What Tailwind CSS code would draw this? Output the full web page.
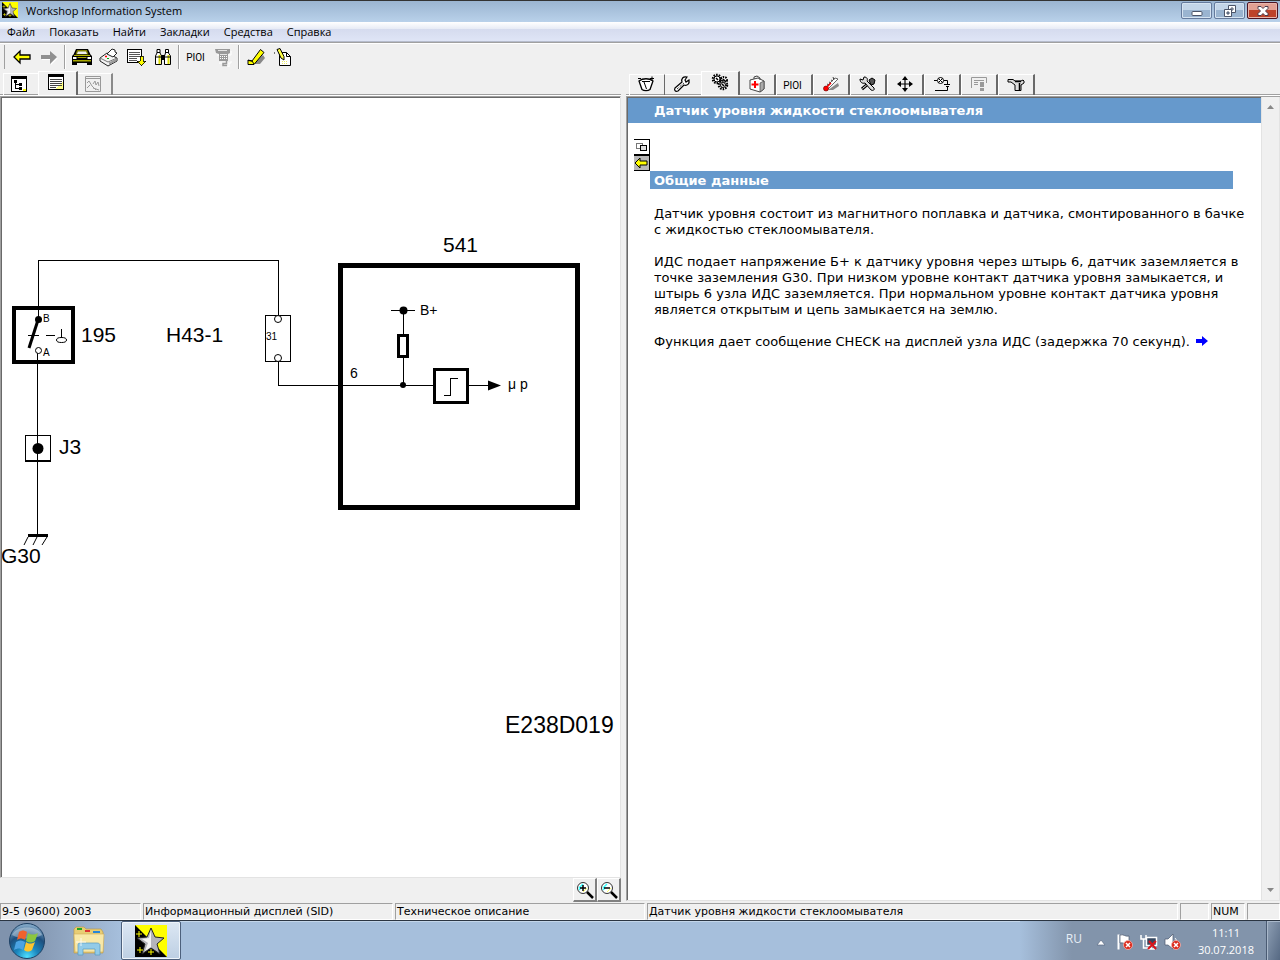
<!DOCTYPE html>
<html lang="ru">
  <head>
    <meta charset="UTF-8" />
    <meta name="viewport" content="width=device-width, initial-scale=1.0" />
    <title>Workshop Information System</title>
    <script src="https://cdn.jsdelivr.net/npm/@tailwindcss/browser@4"></script>
  </head>
  <body class="flex h-screen flex-col overflow-hidden bg-[#f0f0f0] font-['Open_Sans',sans-serif] text-[11px] text-black">
    <svg class="hidden">
      <symbol id="star-logo" viewBox="0 0 32 32">
        <path d="M0 0h32v32H0z" fill="#000" />
        <path d="M0 0h32v32z" fill="#ff0" />
        <path d="M16 3l4 9 9 1-7 6 3 10-9-6-9 6 3-10-8-6 10-1z" fill="#b4b4ba" stroke="#222" />
        <path d="M16 5v17l-6 4 3-8-6-4 7-1z" fill="#f4f4f4" />
        <path d="M4 6v6M1 9h6M5 22v6M2 25h6M16 24v6M13 27h6" stroke="#ff0" />
      </symbol>
      <symbol id="lens" viewBox="0 0 18 18">
        <circle cx="7" cy="7" r="5.5" fill="#fff" stroke="#333" />
        <path d="M3 7l4-4M3 9l2-2" stroke="#3ff" stroke-width="1.5" />
        <path d="M7 11l4-4" stroke="#ff6" />
        <path d="M11 11l6 6" stroke="#000" stroke-width="2.5" />
      </symbol>
      <symbol id="error-badge" viewBox="0 0 10 10">
        <circle cx="5" cy="5" r="4.5" fill="#dc2a1c" stroke="#f3b5ae" stroke-width=".8" />
        <path d="M3 3l4 4M7 3L3 7" stroke="#fff" stroke-width="1.5" />
      </symbol>
    </svg>

    <header class="flex h-[22px] shrink-0 items-start border-t border-[#333] bg-linear-to-b from-[#9bb5d1] to-[#b9d1ea]">
      <svg class="ml-0.5 mt-px size-4"><use href="#star-logo" /></svg>
      <h1 class="ml-2 flex-1 leading-5">Workshop Information System</h1>
      <div class="mr-0.5 mt-px flex gap-0.5">
        <button aria-label="Свернуть" class="flex h-[17px] w-[31px] items-center justify-center rounded-xs border border-[#657a9c] bg-linear-to-b from-[#c3d5e8] from-50% to-[#9ab4d0] to-50% shadow-[inset_0_0_0_1px_#d5e3f1]">
          <svg class="h-3 w-3" viewBox="0 0 12 12"><rect x="1" y="6.500" width="10" height="4" rx="1" fill="#fff" stroke="#4b5468" /></svg>
        </button>
        <button aria-label="Восстановить" class="flex h-[17px] w-[31px] items-center justify-center rounded-xs border border-[#657a9c] bg-linear-to-b from-[#c3d5e8] from-50% to-[#9ab4d0] to-50% shadow-[inset_0_0_0_1px_#d5e3f1]">
          <svg class="h-3 w-3" viewBox="0 0 12 12" fill="#fff" stroke="#4b5468"><path d="M4.500.5h7v7h-7z" /><path d="M7 3h2v2H7z" /><path d="M.5 4.500h7v7h-7z" /><path d="M3 7h2v2H3z" fill="#9ab4d0" /></svg>
        </button>
        <button aria-label="Закрыть" class="flex h-[17px] w-[31px] items-center justify-center rounded-xs border border-[#4d1422] bg-linear-to-b from-[#e2a093] from-50% to-[#bd4229] to-50% shadow-[inset_0_0_0_1px_#e8b5ab]">
          <svg class="h-3 w-3" viewBox="0 0 12 12"><path d="M1 1.500h3l2 2 2-2h3v2L8.500 6l2.500 2.500v2H8l-2-2-2 2H1v-2L3.500 6 1 3.500z" fill="#fff" stroke="#4b3a4a" /></svg>
        </button>
      </div>
    </header>

    <nav class="flex h-5 shrink-0 border-b border-[#b6bccc] bg-[linear-gradient(#fff,#e8ecf6_35%,#d5dbee_35%,#dfe5f6)] leading-5">
      <a href="#" class="px-[7px]">Файл</a>
      <a href="#" class="px-[7px]">Показать</a>
      <a href="#" class="px-[7px]">Найти</a>
      <a href="#" class="px-[7px]">Закладки</a>
      <a href="#" class="px-[7px]">Средства</a>
      <a href="#" class="px-[7px]">Справка</a>
    </nav>

    <div class="flex h-[29px] shrink-0 items-center border-t border-[#a0a0a0] shadow-[inset_0_1px_0_#fff]">
      <span class="ml-1 mr-[3px] h-6 w-px bg-[#a0a0a0]"></span>
      <button aria-label="Назад" class="flex w-[27px] justify-center">
        <svg class="size-5" viewBox="0 0 20 20"><path d="M2 10l6-6v4h10v4H8v4z" fill="#ff0" stroke="#000" stroke-width="1.300" /></svg>
      </button>
      <button aria-label="Вперёд" class="flex w-[27px] justify-center">
        <svg class="size-5" viewBox="0 0 20 20"><path d="M19 11l-7 7v-5H3v-1h9z" fill="#fff" /><path d="M18 10l-7-6v4H2v4h9v5z" fill="#909090" /></svg>
      </button>
      <span class="mx-0.5 h-6 w-0.5 border-l border-[#a0a0a0] bg-white"></span>
      <button aria-label="Автомобиль" class="flex w-[27px] justify-center">
        <svg class="h-5 w-[22px]" viewBox="0 0 22 20">
          <path d="M5 2h12l2.500 5.500L21 9v9h-5v-2H6v2H1V9l1.500-1.500z" fill="#000" />
          <path d="M6 3h10l1.500 4.500h-13z" fill="#808000" /><path d="M7 4.500h8l1 2.500H6z" fill="#f0f0f0" />
          <path d="M3 8h16v1H3z" fill="#b5b500" /><path d="M2 10h3.500v2H2zM16.500 10H20v2h-3.500z" fill="#fff" />
          <path d="M6.500 10h9v1h-9zM2 13h18v1.500H2z" fill="#a8a800" />
        </svg>
      </button>
      <button aria-label="Печать" class="flex w-[27px] justify-center">
        <svg class="size-5" viewBox="0 0 20 20" stroke="#222">
          <path d="M1 11l7-5 10 5v3l-9 5-8-5z" fill="#f4f4f4" /><path d="M1 11l8 4 9-4" fill="none" stroke="#777" />
          <path d="M8 7l5-5 3 1v2l2 1-4 4z" fill="#fff" /><path d="M10 15.500l7.500-4v2.500l-7.500 4z" fill="#999" stroke="none" />
          <path d="M6 9.500h2" stroke="#f00" stroke-width="1.500" /><path d="M8 11.500h2" stroke="#0a0" />
        </svg>
      </button>
      <button aria-label="Список" class="flex w-[27px] justify-center">
        <svg class="size-5" viewBox="0 0 20 20" shape-rendering="crispEdges">
          <path d="M1.500 2.500h14v13h-14z" fill="#fff" stroke="#000" /><path d="M3 5.500h11M3 7.500h11M3 9.500h11M3 11.500h8M3 13.500h8" stroke="#555" />
          <path d="M14 9h3v5h3l-4.500 5L11 14h3z" fill="#ff0" stroke="#000" stroke-width=".8" />
        </svg>
      </button>
      <button aria-label="Поиск" class="flex w-[27px] justify-center">
        <svg class="size-5" viewBox="0 0 20 20" stroke="#000">
          <path d="M4 2.500h3V6l1.500 3v8.500h-6V9L4 6zM12.500 2.500h3V6L17.500 9v8.500h-6V9l1-3z" fill="#fff" />
          <path d="M6.500 8v9M15.500 8v9" stroke="#dd0" stroke-width="2" /><path d="M4 5.500h3M12.500 5.500h3M2.500 10h6M11.500 10h6M8.500 8.500h3v4h-3z" />
        </svg>
      </button>
      <span class="mx-0.5 h-6 w-0.5 border-l border-[#a0a0a0] bg-white"></span>
      <button class="w-[27px] text-center font-['Liberation_Sans_Narrow','Roboto',sans-serif] text-[10px]">PIOI</button>
      <button aria-label="Телефон" class="flex w-[27px] justify-center">
        <svg class="size-5" viewBox="0 0 20 20">
          <path d="M4 8h14V4M6 16h12v-2M10 20h6v-4" fill="none" stroke="#fff" />
          <path d="M2 2h15v4l-2 1v7H6V7L3 6z" fill="#999" /><path d="M5 3.500h9M7 7.500h7" stroke="#e4e4e4" />
          <path d="M7 9.500h7M7 11.500h7" stroke="#fff" stroke-dasharray="1 1" />
          <path d="M13.500 14v2.500H10v2h4" fill="none" stroke="#999" stroke-width="1.500" />
        </svg>
      </button>
      <span class="mx-0.5 h-6 w-0.5 border-l border-[#a0a0a0] bg-white"></span>
      <button aria-label="Маркер" class="flex w-[27px] justify-center">
        <svg class="size-5" viewBox="0 0 20 20"><path d="M8 17l3-4 6-5 2 3-5 6z" fill="#888" /><path d="M2 13l4 1L14.500 2.500l3.500 3L8 17.500H2z" fill="#ff0" stroke="#000" /><path d="M2 13.500l4 .5 2 3" fill="none" stroke="#000" /></svg>
      </button>
      <button aria-label="Заметка" class="flex w-[27px] justify-center">
        <svg class="size-5" viewBox="0 0 20 20"><path d="M6.500 5.500h7l4 4v9h-11z" fill="#fff" stroke="#000" /><path d="M13.500 5.500v4h4" fill="none" stroke="#000" /><path d="M9 14.500h6M9 16.500h6" stroke="#ee6" stroke-dasharray="1 1" /><path d="M4 2.500l3-1 4 8v3.500l-3-2z" fill="#ff4" stroke="#000" /><path d="M1 6h1" stroke="#000" /></svg>
      </button>
    </div>

    <main class="grid min-h-0 flex-1 grid-cols-[626fr_654fr]">
      <section class="flex min-h-0 min-w-0 flex-col pr-[5px]">
        <div role="tablist" class="flex h-[25px] shrink-0 items-end border-b border-white pl-[3px] shadow-[inset_0_-1px_0_#a0a0a0]">
          <button role="tab" aria-label="Дерево" class="flex h-[22px] w-[35px] items-center justify-center border-l border-t border-white bg-[#f0f0f0] pb-0.5 pr-1 shadow-[inset_0_-1px_0_#a0a0a0]">
            <svg class="size-4" viewBox="0 0 16 16" shape-rendering="crispEdges"><path d="M.5.500h15v15H.5z" fill="#fff" stroke="#000" /><path d="M0 0h16v3H0z" /><path d="M3 4h3v3H3zM8 7h3v3H8zM8 11h3v3H8z" /><path d="M4.500 6v7M4 8.500h4M4 12.500h4" stroke="#000" /><path d="M12 13h3v2h-3z" fill="#ff0" /></svg>
          </button>
          <button role="tab" aria-selected="true" aria-label="Текст" class="flex h-6 w-10 items-start justify-center border-l border-r-2 border-t border-l-white border-r-[#696969] border-t-white bg-[#f0f0f0] pr-[3px] pt-0.5">
            <svg class="size-4" viewBox="0 0 16 16" shape-rendering="crispEdges"><path d="M.5.500h15v15H.5z" fill="#fff" stroke="#000" /><path d="M0 0h16v3H0z" /><path d="M7 15l8-8v8z" fill="#ff8" /><path d="M2 5.500h12M2 7.500h12M2 9.500h12M2 11.500h12M2 13.500h6" stroke="#444" /></svg>
          </button>
          <button role="tab" aria-label="График" class="flex h-[22px] w-[35px] items-center justify-center border-r-2 border-t border-r-[#8a8a8a] border-t-white bg-[#f0f0f0] pb-0.5 pr-[3px] shadow-[inset_0_-1px_0_#a0a0a0]">
            <svg class="size-4" viewBox="0 0 16 16" fill="none" stroke="#999"><path d="M.5.500h15v15H.5zM0 2.500h16" /><path d="M2 7l2-2 3 5 4 4M2 12l3-3M8 8l2-3 1 4 2-3 1 4M8 12l6 2" /></svg>
          </button>
        </div>

        <div class="min-h-0 flex-1 border border-b-[#e3e3e3] border-l-[#a0a0a0] border-r-[#e3e3e3] border-t-[#a0a0a0] bg-white">
          <div class="h-full overflow-hidden border-l border-t border-[#696969]">
            <!-- wiring diagram -->
            <svg width="618" height="779" viewBox="2 98 618 779" class="font-['Liberation_Sans',sans-serif] text-[21px]" fill="none" stroke="#000">
              <g shape-rendering="crispEdges">
                <path d="M38.500 318v-57.500h240V317M278.500 361v24.500H434M37.500 353v182" />
                <path d="M12 306h63v58H12zM16 310v50h55v-50z" fill="#000" fill-rule="evenodd" stroke="none" />
                <path d="M28 335.500h11M46 335.500h9M61.500 329v9" />
                <path d="M265.500 315.500h25v46h-25z" />
                <path d="M25.500 435.500h25v25h-25zM25 461.500h26" />
                <path d="M28 535.500h20" stroke-width="3" />
                <path d="M340.500 265.500h237v242h-237z" stroke-width="5" />
                <path d="M391 310.500h24M403.500 310v75" />
                <path d="M398.500 335.500h9v21h-9z" fill="#fff" stroke-width="3" />
                <path d="M434.500 369.500h33v33h-33z" stroke-width="3" />
                <path d="M444 395.500h6.500v-17h7M469 385.500h20" />
              </g>
              <path d="M38 320l-9 28" stroke-width="3" />
              <path d="M28 537l-4 8M37 537l-4 8M47 537l-5 8" />
              <ellipse cx="61.500" cy="340" rx="5" ry="2.500" />
              <circle cx="38.500" cy="350.500" r="3" fill="#fff" />
              <circle cx="278" cy="319" r="3.500" fill="#fff" />
              <circle cx="278" cy="358" r="3.500" fill="#fff" />
              <g fill="#000" stroke="none">
                <circle cx="38.500" cy="319.500" r="3.500" />
                <circle cx="38" cy="448.500" r="5.500" />
                <circle cx="403.500" cy="310.500" r="4" />
                <circle cx="403" cy="385" r="3" />
                <path d="M488 380.500l13 5-13 5z" />
                <text x="81" y="342">195</text>
                <text x="166" y="342">H43-1</text>
                <text x="59" y="454">J3</text>
                <text x="1" y="563">G30</text>
                <text x="443" y="252">541</text>
                <text x="505" y="733" class="text-[23px]">E238D019</text>
                <text x="420" y="315" class="text-sm">B+</text>
                <text x="350" y="378" class="text-sm">6</text>
                <text x="508" y="389" class="text-sm">μ p</text>
                <text x="43" y="322" class="text-[10px]">B</text>
                <text x="43" y="356" class="text-[10px]">A</text>
                <text x="266" y="340" class="text-[10px]">31</text>
              </g>
            </svg>
          </div>
        </div>

        <div class="flex h-[25px] shrink-0 justify-end pb-px">
          <button aria-label="Увеличить" class="flex size-6 items-center justify-center border-b-2 border-l border-r-2 border-t border-b-[#808080] border-l-white border-r-[#808080] border-t-white">
            <svg class="size-[18px]" viewBox="0 0 18 18"><use href="#lens" /><path d="M4 7h6M7 4v6" stroke="#000" stroke-width="1.500" /></svg>
          </button>
          <button aria-label="Уменьшить" class="flex size-6 items-center justify-center border-b-2 border-l border-r-2 border-t border-b-[#808080] border-l-white border-r-[#808080] border-t-white">
            <svg class="size-[18px]" viewBox="0 0 18 18"><use href="#lens" /><path d="M4 7h6" stroke="#000" stroke-width="1.500" /></svg>
          </button>
        </div>
      </section>

      <section class="flex min-h-0 min-w-0 flex-col pb-0.5">
        <div role="tablist" class="flex h-[25px] shrink-0 items-end border-b border-white pl-[3px] shadow-[inset_0_-1px_0_#a0a0a0]">
          <button role="tab" aria-label="Показатели" class="flex h-[21px] w-9 items-center justify-center border-l border-r border-t border-l-white border-r-[#696969] border-t-white bg-[#f0f0f0] pb-0.5 pr-[3px] shadow-[inset_0_-1px_0_#a0a0a0]">
            <svg class="size-[18px]" viewBox="0 0 18 18" fill="none" stroke="#000"><path d="M2 6c4-3 10-3 14 0l-3 8.500c-2 1.500-6 1.500-8 0z" fill="#fff" stroke-width="1.300" /><path d="M1 3.500h3M13 3.500h4M15 1.500v4M9.500 14L7 7M5 6.500l8 0" /></svg>
          </button>
          <button role="tab" aria-label="Ремонт" class="flex h-[21px] w-9 items-center justify-center border-t border-white bg-[#f0f0f0] pb-0.5 pr-[3px] shadow-[inset_0_-1px_0_#a0a0a0]">
            <svg class="size-[18px]" viewBox="0 0 18 18"><path d="M2 13l7-6c-1-3 1-6 5-5l-2 3 1 2 3-2c1 4-2 6-5 5l-6 6c-3 1-4-1-3-3z" fill="#fff" stroke="#000" stroke-width="1.200" /><path d="M4 14l7-6" stroke="#000" stroke-dasharray="1 1" /></svg>
          </button>
          <button role="tab" aria-selected="true" aria-label="Описание" class="flex h-6 w-[39px] items-start justify-center border-l border-r-2 border-t border-l-white border-r-[#696969] border-t-white bg-[#f0f0f0] pr-px pt-px">
            <svg class="size-[18px]" viewBox="0 0 18 18" fill="#fff" stroke="#000">
              <circle cx="6" cy="6" r="4" stroke-width="2.500" stroke-dasharray="1.500 1" /><circle cx="13" cy="7" r="3" stroke-width="2" stroke-dasharray="1.500 1" /><circle cx="12" cy="12" r="4" stroke-width="2.500" stroke-dasharray="1.500 1" />
              <circle cx="6" cy="6" r="3" /><circle cx="12" cy="12" r="2.500" /><path d="M5 5l2 2M11 11l2 2M12 6l2 2" stroke-width="1.500" />
            </svg>
          </button>
          <button role="tab" aria-label="Диагностика" class="flex h-[21px] w-9 items-center justify-center border-r-2 border-t border-r-[#696969] border-t-white bg-[#f0f0f0] pb-0.5 shadow-[inset_0_-1px_0_#a0a0a0]">
            <svg class="size-[18px]" viewBox="0 0 18 18" stroke="#444"><path d="M2 5l8-2 6 3v8l-4 3-10-3z" fill="#fff" /><path d="M12 8l4-2v8l-4 3z" fill="#aaa" stroke-width=".7" /><path d="M6 4V2l3-1 3 2v2" fill="none" /><path d="M7 6v7M3.500 9.500h7" stroke="#f00" stroke-width="2" /></svg>
          </button>
          <button role="tab" class="h-[21px] w-[37px] border-l border-r-2 border-t border-l-white border-r-[#696969] border-t-white bg-[#f0f0f0] pr-[3px] text-center font-['Liberation_Sans_Narrow','Roboto',sans-serif] text-[10px] shadow-[inset_0_-1px_0_#a0a0a0]">PIOI</button>
          <button role="tab" aria-label="Температура" class="flex h-[21px] w-[37px] items-center justify-center border-l border-r-2 border-t border-l-white border-r-[#696969] border-t-white bg-[#f0f0f0] pb-0.5 pr-px shadow-[inset_0_-1px_0_#a0a0a0]">
            <svg class="size-[18px]" viewBox="0 0 18 18"><path d="M6 15l10-7 1 3-6 4z" fill="#888" /><path d="M4 12L13 3l3 1-10 10z" fill="#fff" stroke="#444" stroke-width=".8" /><path d="M5 9l2 1M7 7l2 1M9 5l2 1M11 2l1 3" stroke="#444" /><circle cx="4" cy="13.500" r="2.500" fill="#f00" stroke="#500" stroke-width=".6" /><path d="M5 12l4-4" stroke="#f00" stroke-width="1.500" /></svg>
          </button>
          <button role="tab" aria-label="Инструменты" class="flex h-[21px] w-[37px] items-center justify-center border-l border-r-2 border-t border-l-white border-r-[#696969] border-t-white bg-[#f0f0f0] pb-0.5 pr-px shadow-[inset_0_-1px_0_#a0a0a0]">
            <svg class="size-[18px]" viewBox="0 0 18 18"><path d="M3 14l7-6" stroke="#000" stroke-width="3" /><path d="M3.500 13.500l6-5" stroke="#fff" /><path d="M1 4l3 1 1-3c3 0 4 2 3 4l7 7c1 2-1 3-3 2L6 8C3 9 1 7 1 4z" fill="#ddd" stroke="#000" /><path d="M10 5l3-2 3 2-1 4-3 1z" fill="#555" stroke="#000" /></svg>
          </button>
          <button role="tab" aria-label="Расположение" class="flex h-[21px] w-[37px] items-center justify-center border-l border-r-2 border-t border-l-white border-r-[#696969] border-t-white bg-[#f0f0f0] pb-0.5 pr-px shadow-[inset_0_-1px_0_#a0a0a0]">
            <svg class="size-4" viewBox="0 0 16 16"><path d="M8 2v12M2 8h12" stroke="#000" stroke-width="1.200" /><path d="M8 0l3 4H5zM8 16l3-4H5zM0 8l4-3v6zM16 8l-4-3v6z" /></svg>
          </button>
          <button role="tab" aria-label="Схема" class="flex h-[21px] w-[37px] items-center justify-center border-l border-r-2 border-t border-l-white border-r-[#696969] border-t-white bg-[#f0f0f0] pb-0.5 pr-px shadow-[inset_0_-1px_0_#a0a0a0]">
            <svg class="size-4" viewBox="0 0 16 16" fill="none" stroke="#000"><circle cx="6.500" cy="4.500" r="3" fill="#fff" /><path d="M0 4.500h3M10 4.500h3.500v4M4.500 2.500l4 4M8.500 2.500l-4 4M10 8.500h6M12 10.500h3M13.500 11v3.500H1" /></svg>
          </button>
          <button role="tab" aria-label="Сообщения" class="flex h-[21px] w-[37px] items-center justify-center border-l border-r-2 border-t border-l-white border-r-[#696969] border-t-white bg-[#f0f0f0] pb-0.5 pr-px shadow-[inset_0_-1px_0_#a0a0a0]">
            <svg class="size-4" viewBox="0 0 16 16" fill="none" stroke="#999"><path d="M.5 12V1.500h15V7M3 4.500h10M3 6.500h4M3 8.500h4" /><path d="M9 6h4v5H9zM9 12h4v3H9z" fill="#999" stroke="none" /></svg>
          </button>
          <button role="tab" aria-label="Обслуживание" class="flex h-[21px] w-[37px] items-center justify-center border-l border-r-2 border-t border-l-white border-r-[#696969] border-t-white bg-[#f0f0f0] pb-0.5 pr-px shadow-[inset_0_-1px_0_#a0a0a0]">
            <svg class="size-[18px]" viewBox="0 0 18 18"><path d="M1 4.500h5l2 1.500h6l2-1 1 1v2l-3 2v5.500H8V10L4 7H1z" fill="#ddd" stroke="#000" /><path d="M8 6.500h6M12.500 8v7" stroke="#000" stroke-width="1.500" /></svg>
          </button>
        </div>

        <div class="flex min-h-0 flex-1 border-b border-l border-t border-b-[#e3e3e3] border-l-[#a0a0a0] border-t-[#a0a0a0] bg-white">
          <article class="min-w-0 flex-1 overflow-hidden border-l border-t border-[#696969] pb-4 font-['DejaVu_Sans',sans-serif] text-[13px] leading-4">
            <h2 class="bg-[#6699cc] pb-1 pl-[26px] pt-[5px] font-bold text-white">Датчик уровня жидкости стеклоомывателя</h2>
            <div class="ml-1.5 mt-4 flex w-4 flex-col">
              <button aria-label="Копия окна" class="h-4 w-4 border-b border-r border-t border-black bg-white">
                <svg class="h-3.5 w-[15px]" viewBox="0 0 15 14" fill="none" shape-rendering="crispEdges"><path d="M2.500 3.500h6v5h-6z" stroke="#777" /><path d="M6.500 5.500h6v5h-6z" fill="#ddd" stroke="#000" /></svg>
              </button>
              <button aria-label="Назад" class="h-4 w-4 border-b border-r border-t border-black bg-[#b8b8b8]">
                <svg class="h-3.5 w-[15px]" viewBox="0 0 15 14"><path d="M1 7l5-5v3h7v4H6v3z" fill="#ff0" stroke="#000" /></svg>
              </button>
            </div>
            <h3 class="ml-[22px] mr-7 bg-[#6699cc] px-1 pt-0.5 font-bold text-white">Общие данные</h3>
            <div class="ml-[26px] mr-3 mt-[17px] space-y-4">
              <p>Датчик уровня состоит из магнитного поплавка и датчика, смонтированного в бачке с жидкостью стеклоомывателя.</p>
              <p>ИДС подает напряжение Б+ к датчику уровня через штырь 6, датчик заземляется в точке заземления G30. При низком уровне контакт датчика уровня замыкается, и штырь 6 узла ИДС заземляется. При нормальном уровне контакт датчика уровня является открытым и цепь замыкается на землю.</p>
              <p>
                Функция дает сообщение CHECK на дисплей узла ИДС (задержка 70 секунд).
                <a href="#" aria-label="Далее" class="inline-block pl-0.5"><svg class="h-2.5 w-3" viewBox="0 0 12 10"><path d="M0 3h6V0l6 5-6 5V7H0z" fill="#00f" /></svg></a>
              </p>
            </div>
          </article>
          <div class="flex w-[18px] shrink-0 flex-col justify-between border-l border-[#e3e3e3] bg-[#f0f0f0]">
            <button aria-label="Вверх" class="flex h-5 items-center justify-center"><svg class="h-1 w-[7px]" viewBox="0 0 7 4"><path d="M0 4l3.500-4L7 4z" fill="#888" /></svg></button>
            <button aria-label="Вниз" class="flex h-5 items-center justify-center"><svg class="h-1 w-[7px]" viewBox="0 0 7 4"><path d="M0 0l3.500 4L7 0z" fill="#888" /></svg></button>
          </div>
          <span class="w-px bg-[#e3e3e3]"></span>
        </div>
      </section>
    </main>

    <footer class="flex h-[17px] shrink-0 gap-0.5 font-['DejaVu_Sans',sans-serif] text-[11px] leading-4">
      <span class="w-[141px] border border-b-white border-l-[#a0a0a0] border-r-white border-t-[#a0a0a0] pl-px">9-5 (9600) 2003</span>
      <span class="w-[250px] border border-b-white border-l-[#a0a0a0] border-r-white border-t-[#a0a0a0] pl-px">Информационный дисплей (SID)</span>
      <span class="w-[250px] border border-b-white border-l-[#a0a0a0] border-r-white border-t-[#a0a0a0] pl-px">Техническое описание</span>
      <span class="flex-1 border border-b-white border-l-[#a0a0a0] border-r-white border-t-[#a0a0a0] pl-px">Датчик уровня жидкости стеклоомывателя</span>
      <span class="w-[29px] border border-b-white border-l-[#a0a0a0] border-r-white border-t-[#a0a0a0]"></span>
      <span class="w-[34px] border border-b-white border-l-[#a0a0a0] border-r-white border-t-[#a0a0a0] pl-px">NUM</span>
      <span class="w-[33px] border border-b-white border-l-[#a0a0a0] border-r-white border-t-[#a0a0a0]"></span>
    </footer>

    <div class="flex h-10 shrink-0 border-t border-[#2b3542] bg-[#a6bfdc] shadow-[inset_0_1px_0_#c3d6ea]">
      <div class="flex w-[121px] items-center bg-linear-to-r from-[#8093ad] from-20% to-[#a6bfdc]">
        <button aria-label="Пуск" class="ml-2">
          <svg class="size-[38px]" viewBox="0 0 38 38">
            <defs>
              <radialGradient id="orb" cx=".5" cy=".95" r=".9"><stop offset="0" stop-color="#4fe0ff" /><stop offset=".35" stop-color="#1b86bd" /><stop offset=".7" stop-color="#1d4f7e" /><stop offset="1" stop-color="#7fa5c5" /></radialGradient>
            </defs>
            <circle cx="19" cy="19" r="17.500" fill="url(#orb)" stroke="#1e4266" />
            <path d="M4 13C8 3 30 3 34 13c-7 4-22 5-30 0z" fill="#fff" opacity=".35" />
            <path d="M11 10c3-2 5-2 8 0l-2 8c-3-2-5-2-8 0z" fill="#f0622d" />
            <path d="M20 11c3 2 6 2 10 0l-3 8c-3 2-6 2-9 0z" fill="#8cc63f" />
            <path d="M8 20c3-2 6-2 9 0l-2 8c-3-2-5-2-9 0z" fill="#4ba3e3" />
            <path d="M18 20c3 2 5 2 9 0l-3 8c-3 2-5 2-8 0z" fill="#fdc52e" />
          </svg>
        </button>
        <button aria-label="Проводник" class="ml-[26px]">
          <svg class="h-[30px] w-[34px]" viewBox="0 0 34 30">
            <path d="M2 3l2-2h8l2 2h15l2 3v21H2z" fill="#e8cd74" stroke="#bb9540" stroke-width=".6" />
            <path d="M5 2h5v2H5z" fill="#23a523" /><path d="M13 4h5v2h-5z" fill="#d33" /><path d="M21 5h7v2h-7z" fill="#2987d8" />
            <path d="M2 8h30l-1 18H3z" fill="#f8e8a8" stroke="#d0ad58" stroke-width=".6" />
            <path d="M6 29V19c0-2 1-2 3-2h16c2 0 3 1 3 2v10h-5v-6H11v6z" fill="#92cbe8" stroke="#5798be" stroke-width=".7" />
            <path d="M4 16h10M9 12v8" stroke="#fff" opacity=".8" />
          </svg>
        </button>
      </div>
      <button aria-label="Workshop Information System" class="flex h-[39px] w-[60px] items-center justify-center rounded-xs border border-[#4c607c] bg-linear-to-b from-[#dce7f3] to-[#bdcfe3] shadow-[inset_0_0_0_1px_#eef4fa]">
        <svg class="size-8"><use href="#star-logo" /></svg>
      </button>
      <div class="ml-auto flex items-center bg-linear-to-r from-[#a6bfdc] to-[#8294ab] to-20% pl-[46px] text-white">
        <span class="mb-1 text-xs text-[#e6edf5]">RU</span>
        <button aria-label="Скрытые значки" class="ml-3.5 mt-1"><svg class="h-2 w-2.5" viewBox="0 0 10 8"><path d="M1 6l4-5 4 5z" fill="#fff" stroke="#5b6c84" stroke-width=".7" /></svg></button>
        <svg class="ml-2.5 mt-0.5 size-[18px]" viewBox="0 0 18 18"><path d="M2.500 1.500v15" stroke="#fff" stroke-width="2" /><path d="M4 2c4-1 5 2 9 1v8c-4 1-5-2-9-1z" fill="#fff" stroke="#4a586d" stroke-width=".7" /><use href="#error-badge" x="7" y="7" width="10" height="10" /></svg>
        <svg class="ml-1.5 mt-0.5 size-[18px]" viewBox="0 0 18 18"><path d="M6.500 4.500h10v8h-10z" fill="#34465f" stroke="#fff" stroke-width="1.500" /><path d="M1 2v4h5V2M3.500 6v9H12M8 16h7" fill="none" stroke="#fff" stroke-width="1.500" /><path d="M9 8l7 8M16 8l-8 8" stroke="#d9141a" stroke-width="2" /></svg>
        <svg class="ml-1.5 mt-0.5 size-[18px]" viewBox="0 0 18 18"><path d="M1 6h3l5-5v15l-5-4H1z" fill="#fff" stroke="#4a586d" stroke-width=".7" /><path d="M11 5c2 2 2 5 0 8" fill="none" stroke="#fff" /><use href="#error-badge" x="7" y="7" width="10" height="10" /></svg>
        <div class="ml-4 mr-3 text-center leading-[17px]">
          <div>11:11</div>
          <div>30.07.2018</div>
        </div>
        <button aria-label="Свернуть все окна" class="h-full w-3.5 border-l border-[#4a5b73] bg-linear-to-br from-[#8fa0b5] to-[#566983] shadow-[inset_1px_1px_0_#a9b8ca]"></button>
      </div>
    </div>
  </body>
</html>
